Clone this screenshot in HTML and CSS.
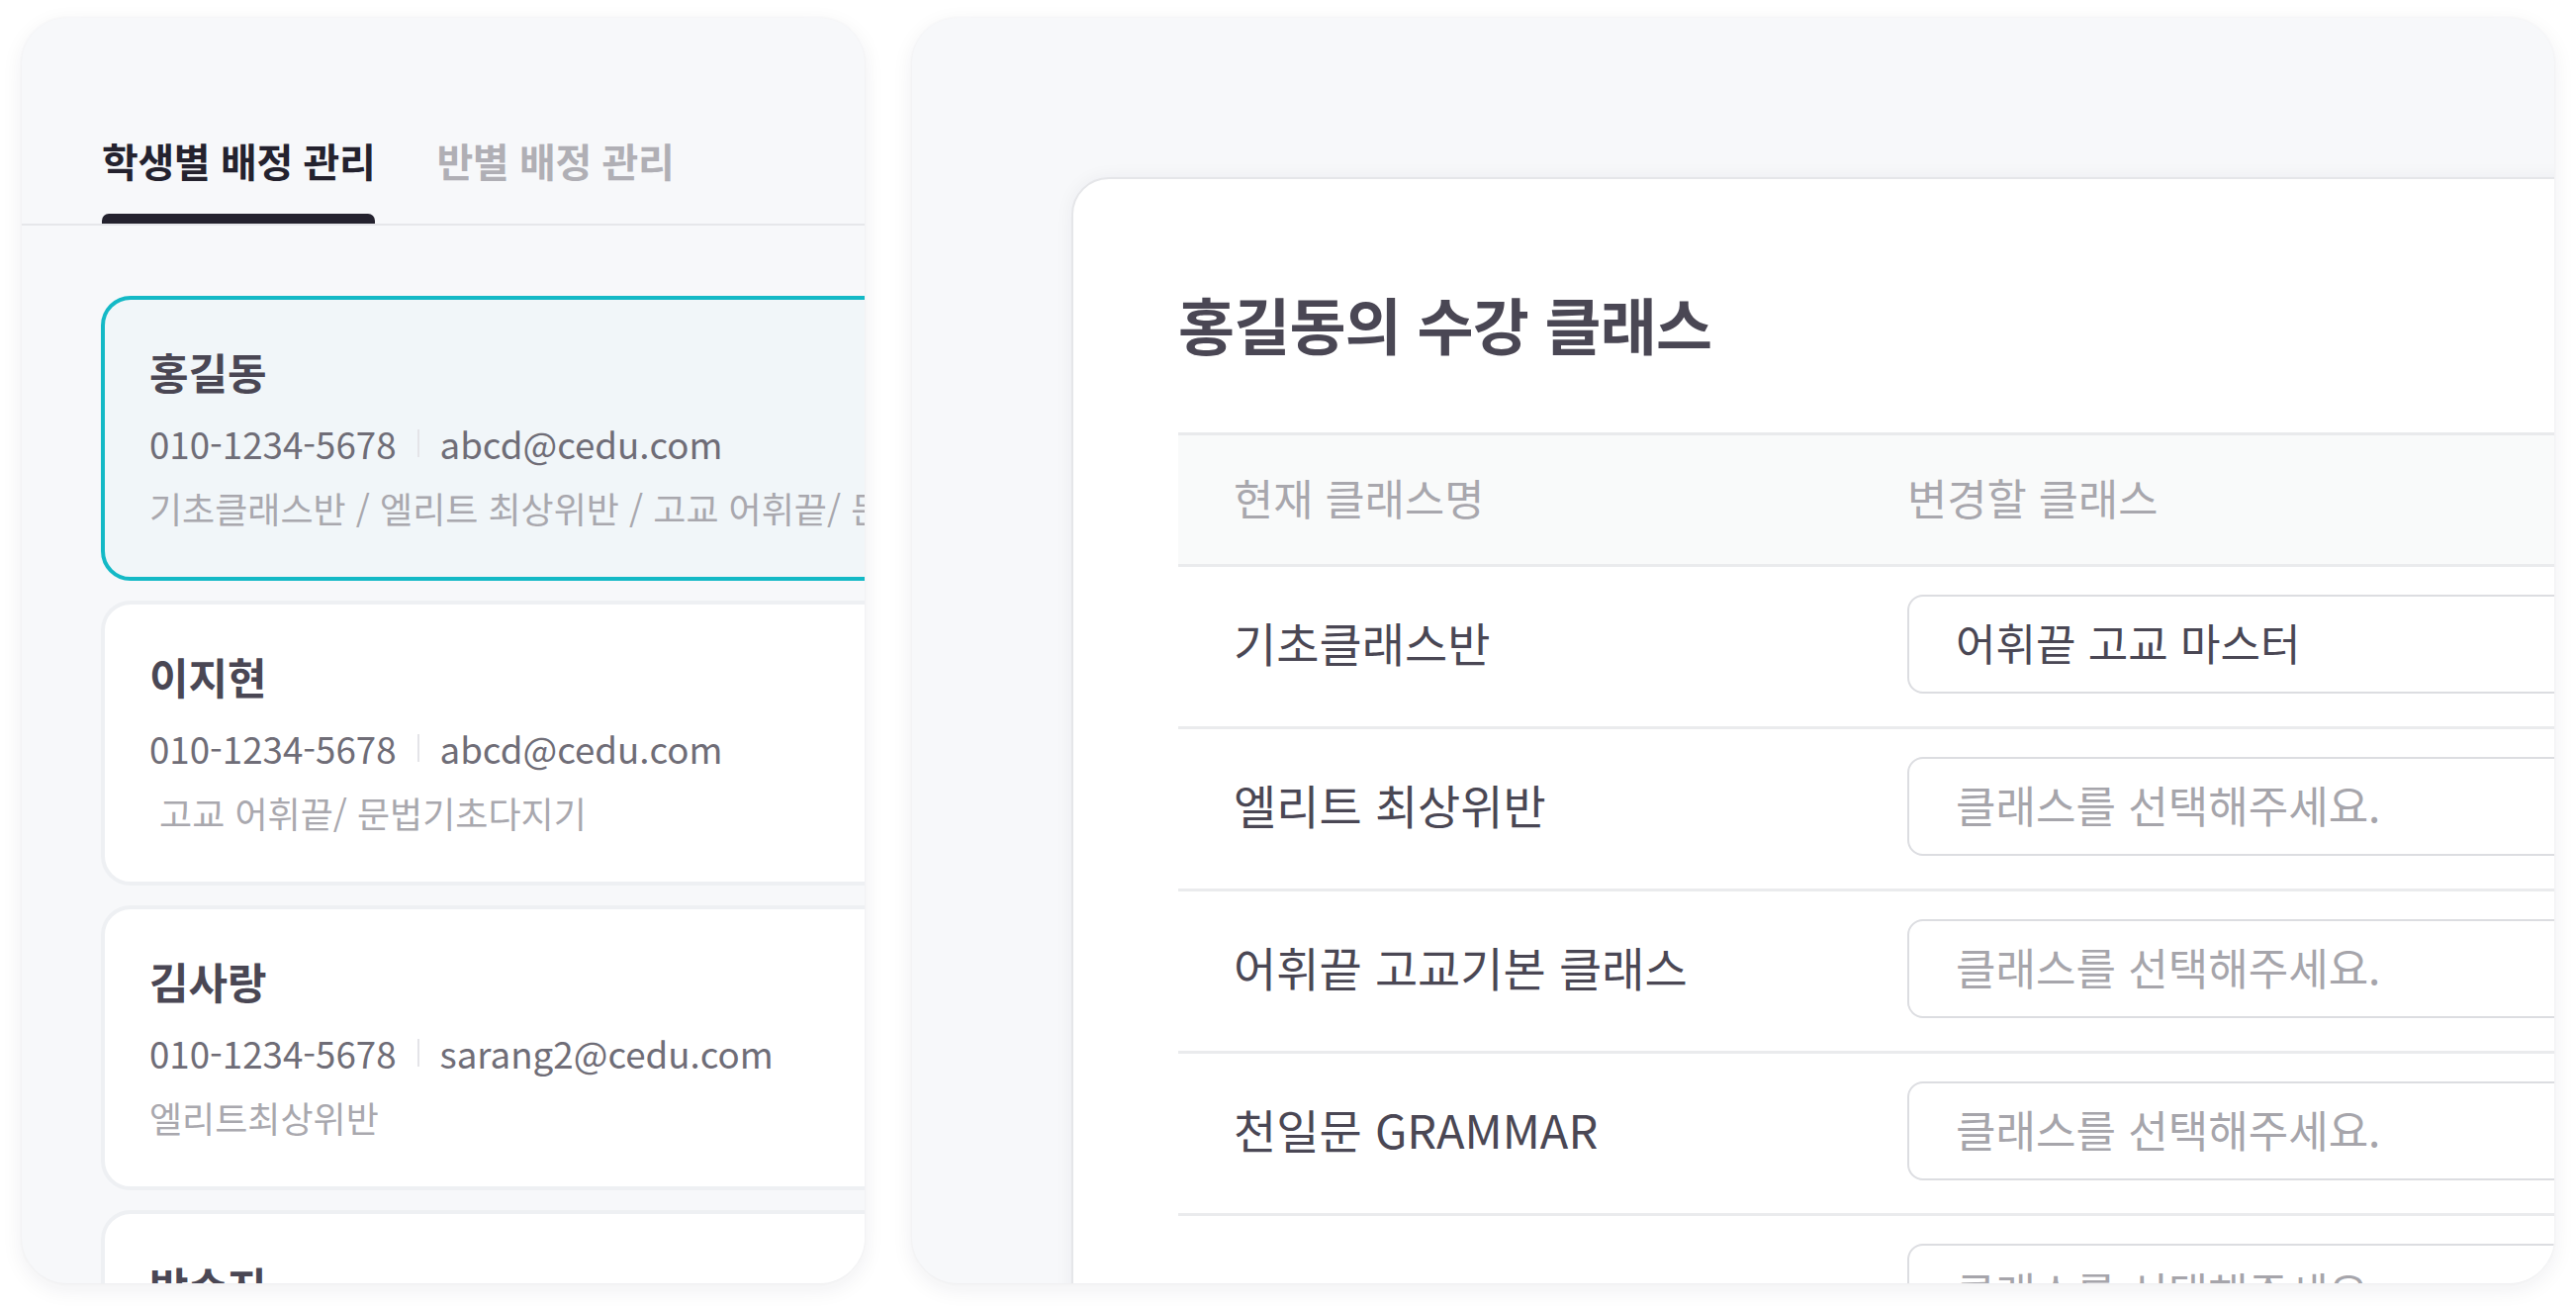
FILE: index.html
```html
<!DOCTYPE html>
<html lang="ko">
<head>
<meta charset="utf-8">
<title>배정 관리</title>
<link rel="stylesheet" href="styles.css">
</head>
<body>
<div class="stage">
  <section class="panel panel-left">
    <nav class="tabs">
      <div class="tab active">학생별 배정 관리</div>
      <div class="tab">반별 배정 관리</div>
    </nav>
    <div class="cards">
      <div class="card selected">
        <div class="name">홍길동</div>
        <div class="contact"><span>010-1234-5678</span><i class="sep"></i><span>abcd@cedu.com</span></div>
        <div class="classes">기초클래스반 / 엘리트 최상위반 / 고교 어휘끝/ 문법기초다지기</div>
      </div>
      <div class="card">
        <div class="name">이지현</div>
        <div class="contact"><span>010-1234-5678</span><i class="sep"></i><span>abcd@cedu.com</span></div>
        <div class="classes pre"> 고교 어휘끝/ 문법기초다지기</div>
      </div>
      <div class="card">
        <div class="name">김사랑</div>
        <div class="contact"><span>010-1234-5678</span><i class="sep"></i><span>sarang2@cedu.com</span></div>
        <div class="classes">엘리트최상위반</div>
      </div>
      <div class="card">
        <div class="name">박수지</div>
        <div class="contact"><span>010-1234-5678</span><i class="sep"></i><span>suji@cedu.com</span></div>
        <div class="classes">기초클래스반</div>
      </div>
    </div>
  </section>
  <section class="panel panel-right">
    <div class="sheet">
      <h1 class="title">홍길동의 수강 클래스</h1>
      <div class="table">
        <div class="row head">
          <div class="cell first">현재 클래스명</div>
          <div class="cell">변경할 클래스</div>
        </div>
        <div class="row">
          <div class="cell first">기초클래스반</div>
          <div class="cell"><div class="select filled">어휘끝 고교 마스터</div></div>
        </div>
        <div class="row">
          <div class="cell first">엘리트 최상위반</div>
          <div class="cell"><div class="select">클래스를 선택해주세요.</div></div>
        </div>
        <div class="row">
          <div class="cell first">어휘끝 고교기본 클래스</div>
          <div class="cell"><div class="select">클래스를 선택해주세요.</div></div>
        </div>
        <div class="row">
          <div class="cell first">천일문 GRAMMAR</div>
          <div class="cell"><div class="select">클래스를 선택해주세요.</div></div>
        </div>
        <div class="row">
          <div class="cell first"></div>
          <div class="cell"><div class="select">클래스를 선택해주세요.</div></div>
        </div>
      </div>
    </div>
  </section>
</div>
</body>
</html>
```
FILE: styles.css
```css
* { box-sizing: border-box; }
html, body { margin: 0; padding: 0; background: #ffffff; }
body {
  font-family: "Noto Sans CJK KR", "Noto Sans", sans-serif;
  color: #4a4754;
  width: 2604px;
  height: 1324px;
  overflow: hidden;
}
.stage {
  display: flex;
  gap: 48px;
  padding: 18px 22px 0 22px;
}
.panel {
  background: #f7f8fa;
  border-radius: 46px;
  height: 1279px;
  overflow: hidden;
  box-shadow: 0 6px 22px rgba(30, 30, 50, 0.07), 0 0 3px rgba(30, 30, 50, 0.05);
  flex: none;
}
.panel-left { width: 852px; }
.panel-right { width: 1660px; padding: 161px 0 0 161px; }

/* tabs */
.tabs {
  display: flex;
  align-items: flex-end;
  gap: 62px;
  height: 210px;
  padding-left: 81px;
  border-bottom: 2px solid #e6e7ea;
}
.tab {
  display: flex;
  flex-direction: column;
  gap: 26px;
  font-size: 40px;
  line-height: 56px;
  font-weight: 700;
  letter-spacing: -0.4px;
  color: #b0afb5;
  white-space: nowrap;
}
.tab::after {
  content: "";
  height: 10px;
  border-radius: 7px 7px 0 0;
  background: transparent;
}
.tab.active { color: #24222e; }
.tab.active::after { background: #24222e; }

/* cards */
.cards {
  display: flex;
  flex-direction: column;
  gap: 20px;
  padding: 71px 0 0 80px;
}
.card {
  width: 1000px;
  height: 288px;
  flex: none;
  background: #ffffff;
  border: 4px solid #eef0f3;
  border-radius: 30px;
  padding: 44px 0 0 45px;
}
.card.selected {
  background: #f1f6f9;
  border-color: #14b9c6;
}
.name {
  font-size: 43px;
  line-height: 56px;
  font-weight: 700;
  color: #4a4754;
}
.contact {
  display: flex;
  align-items: center;
  margin-top: 19px;
  font-size: 36.7px;
  line-height: 52px;
  color: #6f6d77;
  white-space: nowrap;
}
.sep {
  width: 2px;
  height: 28px;
  background: #e4e4e8;
  margin: 0 21px 0 21px;
}
.classes {
  margin-top: 15px;
  font-size: 36px;
  line-height: 48px;
  color: #a9a8ae;
  white-space: nowrap;
}
.classes.pre { white-space: pre; }

/* right sheet */
.sheet {
  width: 1700px;
  height: 1300px;
  background: #ffffff;
  border: 2px solid #e5e6e9;
  border-radius: 38px;
  padding: 106px 0 0 106px;
  box-shadow: 0 0 18px rgba(30, 30, 50, 0.05);
}
.title {
  margin: 0;
  font-size: 62px;
  line-height: 80px;
  font-weight: 700;
  letter-spacing: -0.8px;
  color: #4a4754;
}
.table {
  margin-top: 70px;
  border-top: 3px solid #e9eaec;
}
.row {
  display: grid;
  grid-template-columns: 737px 1fr;
  align-items: center;
  height: 164px;
  padding-bottom: 6px;
  border-bottom: 3px solid #eaebed;
}
.row.head {
  height: 133px;
  background: #f9fafa;
}
.cell {
  font-size: 47px;
  line-height: 64px;
  color: #4a4754;
  white-space: nowrap;
}
.cell.first { padding-left: 56px; padding-bottom: 4px; }
.head .cell {
  font-size: 43.7px;
  color: #a8a7ad;
}
.head .cell.first { padding-bottom: 0; }
.select {
  width: 900px;
  height: 100px;
  border: 2px solid #dcdde1;
  border-radius: 16px;
  padding: 0 0 4px 47px;
  display: flex;
  align-items: center;
  font-size: 44px;
  color: #a6a5ab;
}
.select.filled { color: #4a4754; }
```
